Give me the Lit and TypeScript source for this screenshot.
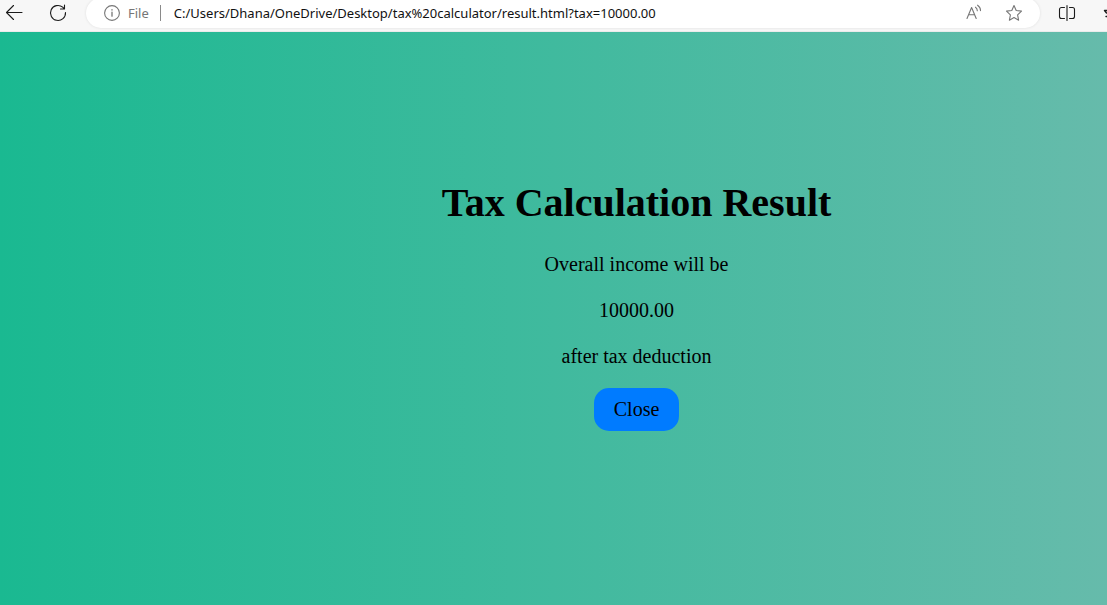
import { LitElement, html, css } from "lit";
import { customElement, property } from "lit/decorators.js";

@customElement("browser-bar")
class BrowserBar extends LitElement {
  @property() url = "";

  static styles = css`
    :host {
      display: block;
      font-family: "Noto Sans", "Open Sans", sans-serif;
      font-size: 13px;
    }
    .bar {
      display: flex;
      align-items: flex-end;
      height: 32px;
      box-sizing: border-box;
      padding-bottom: 3px;
      background: #f7f7f7;
      border-bottom: 1px solid #ebebeb;
      overflow: hidden;
    }
    button {
      display: grid;
      place-items: center;
      flex: none;
      height: 30px;
      padding: 0;
      border: 0;
      background: none;
      color: #1b1b1b;
    }
    .back {
      width: 28px;
    }
    .reload {
      width: 28px;
      margin-left: 16px;
    }
    .address {
      display: flex;
      flex: 1;
      min-width: 0;
      align-items: center;
      height: 30px;
      box-sizing: border-box;
      margin-left: 14px;
      padding: 0 12px 0 18px;
      border-radius: 15px;
      background: #fff;
      box-shadow: 0 0 3px #0000001a;
    }
    .scheme {
      display: flex;
      align-items: center;
      gap: 8px;
      color: #767676;
    }
    .scheme::after {
      content: "";
      width: 1px;
      height: 16px;
      margin: 0 13px 0 3px;
      background: #8a8a8a;
    }
    input {
      flex: 1;
      min-width: 0;
      padding: 0;
      border: 0;
      outline: 0;
      background: none;
      color: #111;
      font: inherit;
    }
    .address button {
      width: 28px;
      color: #767676;
    }
    .address button + button {
      margin-left: 12px;
    }
    .split {
      width: 28px;
      margin-left: 13px;
    }
    .more {
      width: 12px;
      margin-left: 14px;
      overflow: hidden;
    }
    svg {
      display: block;
      fill: none;
      stroke: currentColor;
      stroke-width: 1.1;
      stroke-linecap: round;
      stroke-linejoin: round;
    }
  `;

  render() {
    return html`
      <nav class="bar">
        <button class="back" aria-label="Back">
          <svg width="18" height="18" viewBox="0 0 18 18">
            <path d="M17 8.5H1.5M8.5 1.5l-7 7 7 7" />
          </svg>
        </button>
        <button class="reload" aria-label="Reload">
          <svg width="18" height="18" viewBox="0 0 18 18">
            <path d="M16.5 8.5a7.5 7.5 0 1 1-2.8-5.4L15.5 5M15.5 1v4h-4" />
          </svg>
        </button>
        <div class="address">
          <label class="scheme" for="url">
            <svg width="16" height="16" viewBox="0 0 16 16">
              <circle cx="8" cy="8" r="7.4" />
              <path d="M8 7.2v4M8 4.6v.4" stroke-width="1.3" />
            </svg>
            File
          </label>
          <input id="url" type="text" .value=${this.url} />
          <button aria-label="Read aloud">
            <svg width="18" height="18" viewBox="0 0 18 18">
              <path d="M2 14.5 6.6 3.5l4.6 11M3.6 10.7h6M10.5 3.2c1.2.8 1.8 2 1.8 3.6M12.6 1.2c1.9 1.3 2.9 3 2.9 5.4" />
            </svg>
          </button>
          <button aria-label="Add to favourites">
            <svg width="18" height="18" viewBox="0 0 18 18">
              <path d="m9 1.5 2.2 5 5.3.6-3.9 3.7 1 5.4L9 13.6l-4.6 2.6 1-5.4-3.9-3.7 5.3-.6z" />
            </svg>
          </button>
        </div>
        <button class="split" aria-label="Split screen">
          <svg width="18" height="18" viewBox="0 0 18 18">
            <path d="M6.5 3.5h-3a2 2 0 0 0-2 2v7a2 2 0 0 0 2 2h3M11.5 3.5h3a2 2 0 0 1 2 2v7a2 2 0 0 1-2 2h-3M9 1.5v15" />
          </svg>
        </button>
        <button class="more" aria-label="Favourites">
          <svg width="12" height="18" viewBox="0 0 12 18">
            <path d="M12 6.5H9.5l2 2.5M12 12.5h-1" stroke-width="1.4" />
          </svg>
        </button>
      </nav>
    `;
  }
}

@customElement("app-root")
class AppRoot extends LitElement {
  @property() amount = "10000.00";

  static styles = css`
    :host {
      display: flex;
      flex-direction: column;
      min-height: 100vh;
    }
    main {
      display: flex;
      flex: 1;
      flex-direction: column;
      align-items: center;
      box-sizing: border-box;
      padding: 148px 0 32px 15%;
      background: linear-gradient(to right, #1ab991, #66bbab);
      color: #000;
      font-family: "Liberation Serif", "Times New Roman", serif;
      font-size: 20px;
      line-height: 22px;
      text-align: center;
    }
    h1 {
      margin: 0 0 27px;
      font-size: 40px;
      line-height: 46px;
    }
    p {
      margin: 0 0 24px;
    }
    p:last-of-type {
      margin-bottom: 21px;
    }
    button {
      padding: 10px 20px;
      border: 0;
      border-radius: 15px;
      background: #007bff;
      color: #000;
      font: inherit;
      line-height: 23px;
    }
  `;

  render() {
    return html`
      <browser-bar
        url="C:/Users/Dhana/OneDrive/Desktop/tax%20calculator/result.html?tax=${this.amount}"
      ></browser-bar>
      <main>
        <h1>Tax Calculation Result</h1>
        <p>Overall income will be</p>
        <p>${this.amount}</p>
        <p>after tax deduction</p>
        <button type="button">Close</button>
      </main>
    `;
  }
}
